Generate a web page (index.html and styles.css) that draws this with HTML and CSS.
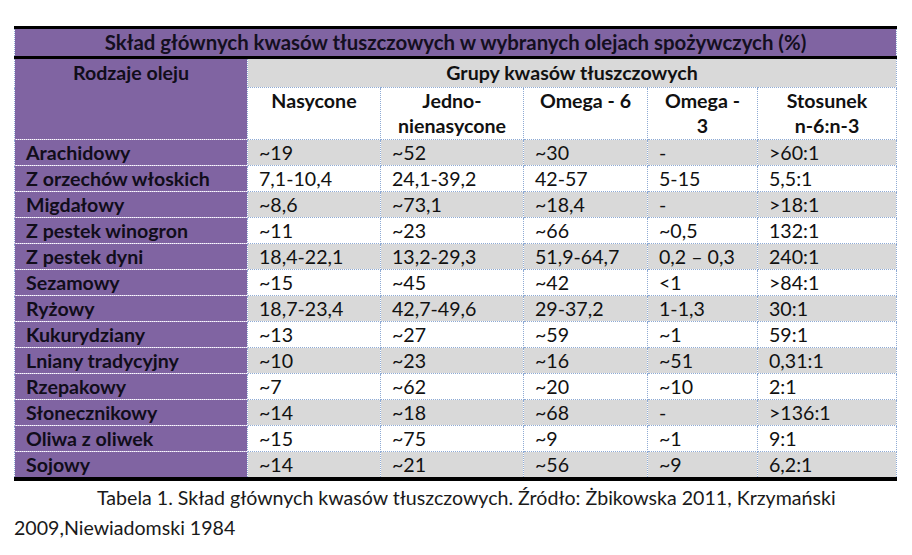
FILE: index.html
```html
<!DOCTYPE html>
<html lang="pl">
<head>
<meta charset="utf-8">
<title>Skład głównych kwasów tłuszczowych</title>
<link rel="stylesheet" href="styles.css">
</head>
<body>
<div class="page">
  <table class="oils">
    <colgroup>
      <col class="c1"><col class="c2"><col class="c3"><col class="c4"><col class="c5"><col class="c6">
    </colgroup>
    <thead>
      <tr class="title-row"><th colspan="6">Skład głównych kwasów tłuszczowych w wybranych olejach spożywczych (%)</th></tr>
      <tr class="group-row">
        <th rowspan="2" class="kind">Rodzaje oleju</th>
        <th colspan="5" class="group">Grupy kwasów tłuszczowych</th>
      </tr>
      <tr class="sub-row">
        <th>Nasycone</th>
        <th>Jedno-<br>nienasycone</th>
        <th>Omega - 6</th>
        <th>Omega -<br>3</th>
        <th>Stosunek<br>n-6:n-3</th>
      </tr>
    </thead>
    <tbody>
      <tr class="g"><th>Arachidowy</th><td>~19</td><td>~52</td><td>~30</td><td>-</td><td>&gt;60:1</td></tr>
      <tr><th>Z orzechów włoskich</th><td>7,1-10,4</td><td>24,1-39,2</td><td>42-57</td><td>5-15</td><td>5,5:1</td></tr>
      <tr class="g"><th>Migdałowy</th><td>~8,6</td><td>~73,1</td><td>~18,4</td><td>-</td><td>&gt;18:1</td></tr>
      <tr><th>Z pestek winogron</th><td>~11</td><td>~23</td><td>~66</td><td>~0,5</td><td>132:1</td></tr>
      <tr class="g"><th>Z pestek dyni</th><td>18,4-22,1</td><td>13,2-29,3</td><td>51,9-64,7</td><td>0,2 – 0,3</td><td>240:1</td></tr>
      <tr><th>Sezamowy</th><td>~15</td><td>~45</td><td>~42</td><td>&lt;1</td><td>&gt;84:1</td></tr>
      <tr class="g"><th>Ryżowy</th><td>18,7-23,4</td><td>42,7-49,6</td><td>29-37,2</td><td>1-1,3</td><td>30:1</td></tr>
      <tr><th>Kukurydziany</th><td>~13</td><td>~27</td><td>~59</td><td>~1</td><td>59:1</td></tr>
      <tr class="g"><th>Lniany tradycyjny</th><td>~10</td><td>~23</td><td>~16</td><td>~51</td><td>0,31:1</td></tr>
      <tr><th>Rzepakowy</th><td>~7</td><td>~62</td><td>~20</td><td>~10</td><td>2:1</td></tr>
      <tr class="g"><th>Słonecznikowy</th><td>~14</td><td>~18</td><td>~68</td><td>-</td><td>&gt;136:1</td></tr>
      <tr><th>Oliwa z oliwek</th><td>~15</td><td>~75</td><td>~9</td><td>~1</td><td>9:1</td></tr>
      <tr class="g last"><th>Sojowy</th><td>~14</td><td>~21</td><td>~56</td><td>~9</td><td>6,2:1</td></tr>
    </tbody>
  </table>
  <p class="caption">Tabela 1. Skład głównych kwasów tłuszczowych. Źródło: Żbikowska 2011, Krzymański<br>2009,Niewiadomski 1984</p>
</div>
</body>
</html>
```

FILE: styles.css
```css
html, body {
  margin: 0;
  padding: 0;
  background: #ffffff;
}

.page {
  padding: 26px 0 0 14px;
  font-family: Lato, "Open Sans", sans-serif;
  color: #111111;
}

.oils {
  border-collapse: collapse;
  table-layout: fixed;
  width: 882px;
  font-size: 19.6px;
}

.c1 { width: 233px; }
.c2 { width: 133px; }
.c3 { width: 143px; }
.c4 { width: 124px; }
.c5 { width: 110px; }
.c6 { width: 139px; }

.oils th,
.oils td {
  border: 1px dotted #8eaad4;
  padding: 0 0 0 11px;
  text-align: left;
  vertical-align: middle;
  white-space: nowrap;
  overflow: hidden;
}

.oils thead th {
  text-align: center;
  vertical-align: top;
  padding: 0;
}

.title-row th {
  background: #8064a2;
  border-top: 3px solid #000;
  border-bottom: 3px solid #000;
  height: 27px;
  line-height: 27px;
  font-size: 20.4px;
  font-weight: bold;
  color: #140f1f;
}

.group-row th.kind {
  background: #8064a2;
  height: 28px;
  line-height: 28px;
  color: #110d1a;
  border-bottom-color: #b9a8d0;
}

.group-row th.group {
  background: #d9d9d9;
  height: 28px;
  line-height: 28px;
}

.sub-row th {
  background: #ffffff;
  height: 51px;
  line-height: 25px;
  padding-top: 1px;
}

.oils tbody tr {
  height: 26px;
  background: #ffffff;
}

.oils tbody tr.g {
  background: #d9d9d9;
}

.oils tbody th {
  background: #8064a2;
  font-weight: bold;
  color: #110d1a;
  line-height: 25px;
  border-bottom-color: #c9bce0;
  border-top-color: #c9bce0;
}

.oils tbody td {
  line-height: 25px;
  font-weight: normal;
}

.oils tbody tr.last th,
.oils tbody tr.last td {
  border-bottom: 4px solid #000;
}

.caption {
  margin: 2px 0 0 0;
  width: 882px;
  font-size: 19.6px;
  line-height: 30px;
  text-indent: 83px;
  color: #1a1a1a;
}
```
